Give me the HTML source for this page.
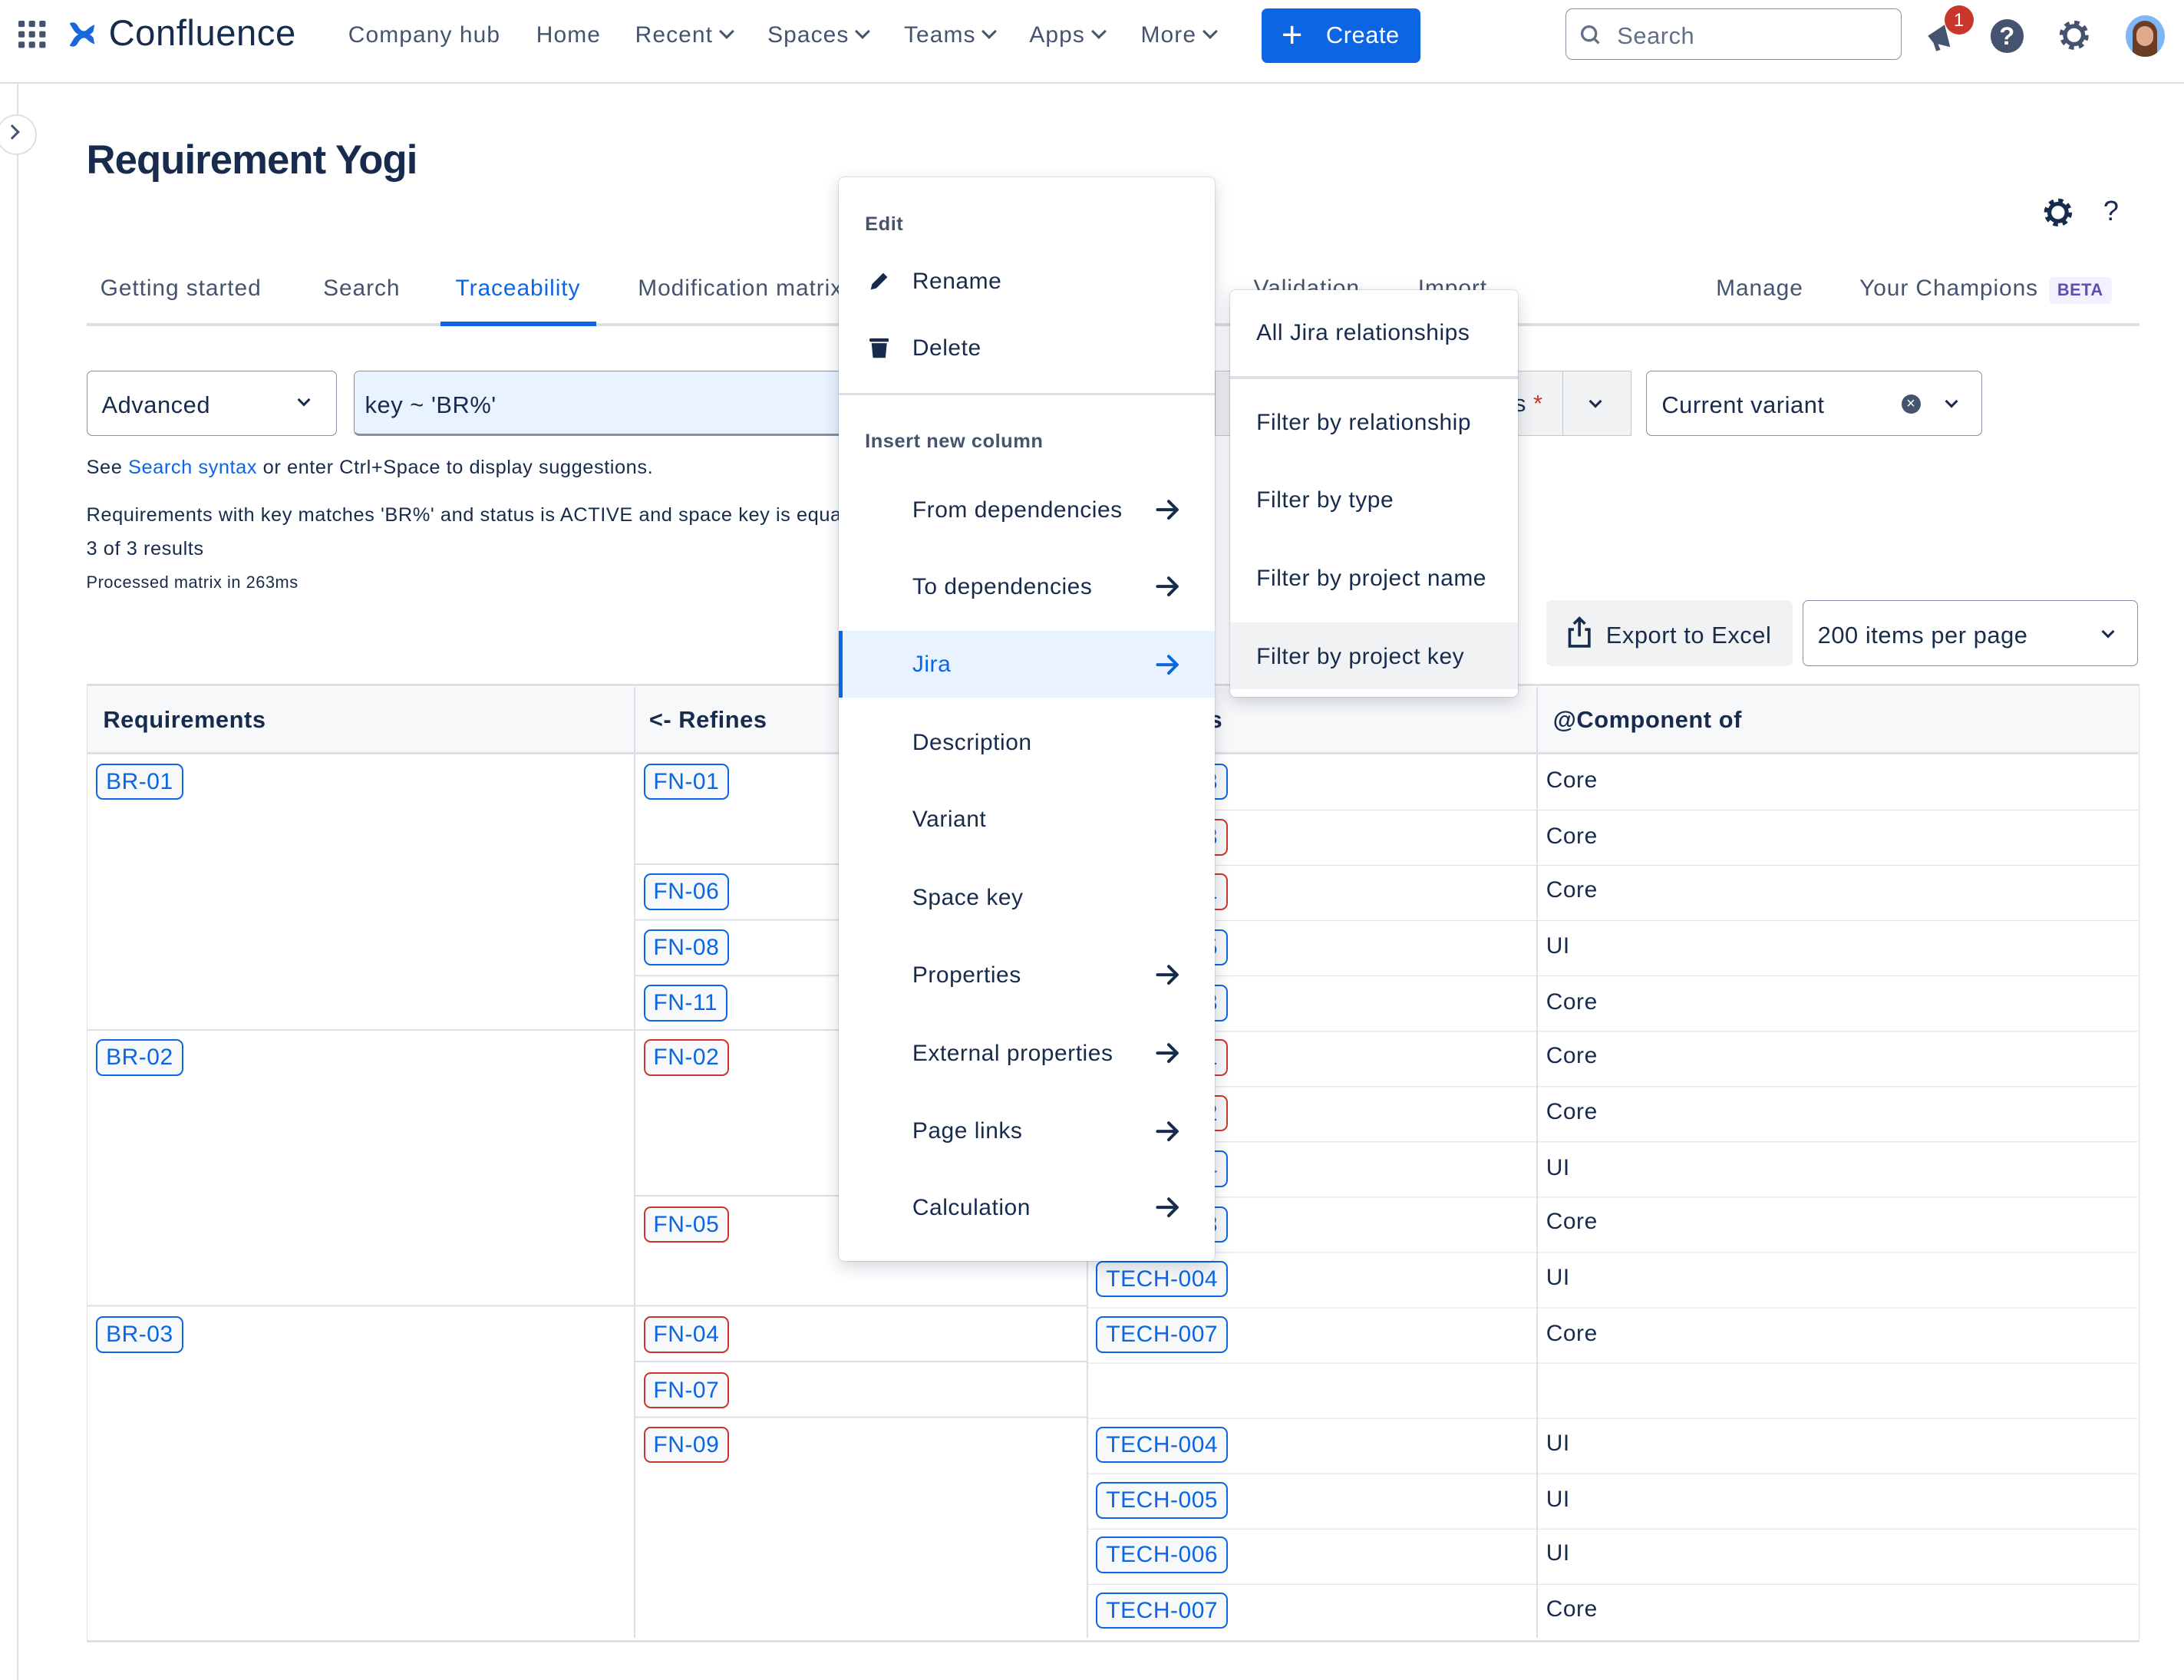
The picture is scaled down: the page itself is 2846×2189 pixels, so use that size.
<!DOCTYPE html>
<html><head><meta charset="utf-8"><style>
html,body{margin:0;padding:0;background:#fff;overflow:hidden}
body{width:2846px;height:2188px}
#w{position:absolute;left:0;top:0;width:1568px;height:1206px;zoom:1.81505;font-family:"Liberation Sans",sans-serif;color:#172b4d;letter-spacing:0.3px}
.a{position:absolute;white-space:nowrap}
.nav{font-size:16.5px;color:#44546f;top:16px;letter-spacing:0.6px}
.chev{display:inline-block;width:6px;height:6px;border-right:2px solid currentColor;border-bottom:2px solid currentColor;transform:rotate(45deg);margin-left:6px;position:relative;top:-4px}
.tab{font-size:16.5px;color:#44546f;top:198px;letter-spacing:0.5px}
.tag{position:absolute;height:24px;line-height:24px;padding:0 6px;border:1.5px solid #0c66e4;border-radius:5px;background:#f7f8f9;color:#0c66e4;font-size:16.5px}
.tag.r{border-color:#c9372c;color:#0c66e4}
.mi{position:absolute;font-size:16.5px;color:#172b4d;left:53px}
.arr{position:absolute;left:226px;width:20px;height:20px}
.cell{position:absolute;font-size:16.5px;color:#172b4d}
</style></head><body><div id="w">
<div class="a" style="left:0;top:59px;width:1568px;height:1px;background:#dcdfe4"></div>
<svg class="a" style="left:13px;top:15px" width="20" height="20" viewBox="0 0 20 20" fill="#44546f"><rect x="0" y="0" width="4.5" height="4.5" rx="1"/><rect x="7.5" y="0" width="4.5" height="4.5" rx="1"/><rect x="15" y="0" width="4.5" height="4.5" rx="1"/><rect x="0" y="7.5" width="4.5" height="4.5" rx="1"/><rect x="7.5" y="7.5" width="4.5" height="4.5" rx="1"/><rect x="15" y="7.5" width="4.5" height="4.5" rx="1"/><rect x="0" y="15" width="4.5" height="4.5" rx="1"/><rect x="7.5" y="15" width="4.5" height="4.5" rx="1"/><rect x="15" y="15" width="4.5" height="4.5" rx="1"/></svg>
<svg class="a" style="left:48px;top:14px" width="22" height="22" viewBox="0 0 22 22" fill="#1868db"><path d="M2 3 Q6 1 8 5 Q11 10 14 8 Q17 5 20 4 L19 9 Q15 13 11 12 Q7 11 5 8 Z"/><path d="M2 19 Q6 21 8 17 Q11 12 14 14 Q17 17 20 18 L19 13 Q15 9 11 10 Q7 11 5 14 Z"/></svg>
<div class="a" style="left:78px;top:9px;font-size:26px;color:#172b4d">Confluence</div>
<div class="a nav" style="left:250px">Company hub</div>
<div class="a nav" style="left:385px">Home</div>
<div class="a nav" style="left:456px">Recent<span class="chev"></span></div>
<div class="a nav" style="left:551px">Spaces<span class="chev"></span></div>
<div class="a nav" style="left:649px">Teams<span class="chev"></span></div>
<div class="a nav" style="left:739px">Apps<span class="chev"></span></div>
<div class="a nav" style="left:819px">More<span class="chev"></span></div>
<div class="a" style="left:906px;top:6px;width:114px;height:39px;background:#0c66e4;border-radius:4px;color:#fff;font-size:17px;line-height:39px"><span style="position:absolute;left:14px;top:0;font-size:26px;font-weight:300">+</span><span style="position:absolute;left:46px">Create</span></div>
<div class="a" style="left:1124px;top:6px;width:240px;height:36px;border:1px solid #8590a2;border-radius:5px"></div>
<svg class="a" style="left:1134px;top:17px" width="16" height="16" viewBox="0 0 16 16" fill="none" stroke="#626f86" stroke-width="1.8"><circle cx="7" cy="7" r="5"/><path d="M10.5 10.5 L14 14"/></svg>
<div class="a" style="left:1161px;top:16px;font-size:17px;color:#626f86">Search</div>
<svg class="a" style="left:1380px;top:14px" width="26" height="26" viewBox="0 0 26 26" fill="#44546f"><path d="M4 12 L16 4 L20 20 L8 17 Z"/><path d="M8 17 L10 23 L13 22 L11 17Z"/></svg>
<div class="a" style="left:1396px;top:4px;width:21px;height:21px;border-radius:50%;background:#c9372c;color:#fff;font-size:13px;text-align:center;line-height:21px">1</div>
<div class="a" style="left:1429px;top:14px;width:24px;height:24px;border-radius:50%;background:#44546f;color:#fff;font-weight:bold;font-size:18px;text-align:center;line-height:24px">?</div>
<svg class="a" style="left:1477px;top:13px" width="24" height="24" viewBox="0 0 24 24"><circle cx="12" cy="12" r="8" fill="none" stroke="#44546f" stroke-width="5" stroke-dasharray="3.2 3.1"/><circle cx="12" cy="12" r="6.5" fill="none" stroke="#44546f" stroke-width="3"/></svg>
<div class="a" style="left:1526px;top:11px;width:28px;height:30px;border-radius:50%;background:#7fb6f5;overflow:hidden"><div style="position:absolute;left:5px;top:4px;width:18px;height:26px;border-radius:9px 9px 3px 3px;background:#6b3d24"></div><div style="position:absolute;left:8px;top:8px;width:12px;height:14px;border-radius:6px;background:#e0a98a"></div></div>
<div class="a" style="left:12px;top:60px;width:1px;height:1146px;background:#dcdfe4"></div>
<div class="a" style="left:-3px;top:82px;width:27px;height:27px;border-radius:50%;border:1.5px solid #dcdfe4;background:#fff"></div>
<div class="a" style="left:5px;top:91px;width:6px;height:6px;border-right:2px solid #44546f;border-top:2px solid #44546f;transform:rotate(45deg)"></div>
<div class="a" style="left:62px;top:98px;font-size:29px;font-weight:bold;letter-spacing:-0.5px">Requirement Yogi</div>
<svg class="a" style="left:1466px;top:141px" width="23" height="23" viewBox="0 0 24 24"><circle cx="12" cy="12" r="8" fill="none" stroke="#172b4d" stroke-width="5" stroke-dasharray="3.2 3.1"/><circle cx="12" cy="12" r="6.5" fill="none" stroke="#172b4d" stroke-width="3"/></svg>
<div class="a" style="left:1510px;top:140px;font-size:20px;color:#172b4d">?</div>
<div class="a tab" style="left:72px">Getting started</div>
<div class="a tab" style="left:232px">Search</div>
<div class="a tab" style="left:327px;color:#0c66e4">Traceability</div>
<div class="a tab" style="left:458px">Modification matrix</div>
<div class="a tab" style="left:900px">Validation</div>
<div class="a tab" style="left:1018px">Import</div>
<div class="a tab" style="left:1232px">Manage</div>
<div class="a tab" style="left:1335px">Your Champions</div>
<div class="a" style="left:1471px;top:199px;width:45px;height:19px;background:#f3f0ff;color:#5e4db2;font-size:12px;font-weight:bold;text-align:center;line-height:19px;border-radius:3px">BETA</div>
<div class="a" style="left:62px;top:232px;width:1474px;height:2px;background:#dcdfe4"></div>
<div class="a" style="left:316px;top:231px;width:112px;height:3px;background:#0c66e4"></div>
<div class="a" style="left:62px;top:266px;width:179px;height:46px;border:1px solid #8590a2;border-radius:4px"></div>
<div class="a" style="left:73px;top:281px;font-size:17px">Advanced</div>
<div class="a" style="left:215px;top:284px;width:5px;height:5px;border-right:2px solid #172b4d;border-bottom:2px solid #172b4d;transform:rotate(45deg)"></div>
<div class="a" style="left:254px;top:266px;width:620px;height:45px;border:1px solid #8590a2;border-bottom:2px solid #8590a2;border-radius:4px;background:#e9f2ff"></div>
<div class="a" style="left:262px;top:281px;font-size:17px">key ~ 'BR%'</div>
<div class="a" style="left:872px;top:266px;width:250px;height:46px;border:1px solid #c1c7d0;background:#f1f2f4"></div>
<div class="a" style="left:1087px;top:280px;font-size:17px">s <span style="color:#c9372c">*</span></div>
<div class="a" style="left:1122px;top:266px;width:48px;height:46px;border:1px solid #c1c7d0;background:#f1f2f4"></div>
<div class="a" style="left:1142px;top:285px;width:5px;height:5px;border-right:2px solid #172b4d;border-bottom:2px solid #172b4d;transform:rotate(45deg)"></div>
<div class="a" style="left:1182px;top:266px;width:240px;height:46px;border:1px solid #8590a2;border-radius:4px"></div>
<div class="a" style="left:1193px;top:281px;font-size:17px">Current variant</div>
<div class="a" style="left:1365px;top:283px;width:14px;height:14px;border-radius:50%;background:#44546f;color:#fff;font-size:11px;text-align:center;line-height:14px">×</div>
<div class="a" style="left:1398px;top:285px;width:5px;height:5px;border-right:2px solid #172b4d;border-bottom:2px solid #172b4d;transform:rotate(45deg)"></div>
<div class="a" style="left:62px;top:328px;font-size:14px">See <span style="color:#0c66e4">Search syntax</span> or enter Ctrl+Space to display suggestions.</div>
<div class="a" style="left:62px;top:362px;font-size:14px">Requirements with key matches 'BR%' and status is ACTIVE and space key is equal</div>
<div class="a" style="left:62px;top:386px;font-size:14px">3 of 3 results</div>
<div class="a" style="left:62px;top:411px;font-size:12px">Processed matrix in 263ms</div>
<div class="a" style="left:1110px;top:431px;width:177px;height:47px;background:#f1f2f4;border-radius:4px"></div>
<svg class="a" style="left:1124px;top:442px" width="20" height="24" viewBox="0 0 20 24" fill="none" stroke="#172b4d" stroke-width="2"><path d="M6 10 H3 V22 H17 V10 H14"/><path d="M10 2 V15 M6 6 L10 2 L14 6"/></svg>
<div class="a" style="left:1153px;top:446px;font-size:17px">Export to Excel</div>
<div class="a" style="left:1294px;top:431px;width:240px;height:46px;border:1px solid #8590a2;border-radius:4px"></div>
<div class="a" style="left:1305px;top:446px;font-size:17px">200 items per page</div>
<div class="a" style="left:1510px;top:450px;width:5px;height:5px;border-right:2px solid #172b4d;border-bottom:2px solid #172b4d;transform:rotate(45deg)"></div>
<div class="a" style="left:62px;top:491px;width:1473px;height:685px;border:1px solid #dcdfe4;border-top:2px solid #dcdfe4;border-bottom:2px solid #dcdfe4"></div>
<div class="a" style="left:63px;top:493px;width:1472px;height:47px;background:#f7f8f9;border-bottom:2px solid #dcdfe4"></div>
<div class="a" style="left:74px;top:507px;font-size:17px;font-weight:bold">Requirements</div>
<div class="a" style="left:466px;top:507px;font-size:17px;font-weight:bold">&lt;- Refines</div>
<div class="a" style="left:868px;top:507px;font-size:17px;font-weight:bold">s</div>
<div class="a" style="left:1115px;top:507px;font-size:17px;font-weight:bold">@Component of</div>
<div class="a" style="left:455px;top:493px;width:1px;height:683px;background:#dcdfe4"></div>
<div class="a" style="left:780px;top:493px;width:1px;height:683px;background:#dcdfe4"></div>
<div class="a" style="left:1103px;top:493px;width:1px;height:683px;background:#dcdfe4"></div>
<div class="a" style="left:780px;top:581px;width:755px;height:1px;background:#dcdfe4;box-shadow:0 39.7px 0 #dcdfe4,0 79.4px 0 #dcdfe4,0 119.1px 0 #dcdfe4,0 158.8px 0 #dcdfe4,0 198.5px 0 #dcdfe4,0 238.2px 0 #dcdfe4,0 277.9px 0 #dcdfe4,0 317.6px 0 #dcdfe4,0 357.3px 0 #dcdfe4,0 397px 0 #dcdfe4,0 436.7px 0 #dcdfe4,0 476.4px 0 #dcdfe4,0 516.1px 0 #dcdfe4,0 555.8px 0 #dcdfe4"></div>
<div class="a" style="left:455px;top:620px;width:325px;height:1px;background:#dcdfe4;box-shadow:0 40px 0 #dcdfe4,0 80px 0 #dcdfe4,0 119px 0 #dcdfe4,0 238px 0 #dcdfe4,0 317px 0 #dcdfe4,0 357px 0 #dcdfe4,0 397px 0 #dcdfe4"></div>
<div class="a" style="left:62px;top:739px;width:393px;height:1px;background:#dcdfe4;box-shadow:0 198px 0 #dcdfe4"></div>
<div class="tag" style="left:69px;top:548px">BR-01</div>
<div class="tag" style="left:69px;top:746px">BR-02</div>
<div class="tag" style="left:69px;top:945px">BR-03</div>
<div class="tag" style="left:462px;top:548px">FN-01</div>
<div class="tag" style="left:462px;top:627px">FN-06</div>
<div class="tag" style="left:462px;top:667px">FN-08</div>
<div class="tag" style="left:462px;top:707px">FN-11</div>
<div class="tag r" style="left:462px;top:746px">FN-02</div>
<div class="tag r" style="left:462px;top:866px">FN-05</div>
<div class="tag r" style="left:462px;top:945px">FN-04</div>
<div class="tag r" style="left:462px;top:985px">FN-07</div>
<div class="tag r" style="left:462px;top:1024px">FN-09</div>
<div class="tag" style="left:787px;top:548px">TECH-003</div>
<div class="tag r" style="left:787px;top:588px">TECH-003</div>
<div class="tag r" style="left:787px;top:627px">TECH-001</div>
<div class="tag" style="left:787px;top:667px">TECH-005</div>
<div class="tag" style="left:787px;top:707px">TECH-003</div>
<div class="tag r" style="left:787px;top:746px">TECH-001</div>
<div class="tag r" style="left:787px;top:786px">TECH-002</div>
<div class="tag" style="left:787px;top:826px">TECH-004</div>
<div class="tag" style="left:787px;top:866px">TECH-003</div>
<div class="tag" style="left:787px;top:905px">TECH-004</div>
<div class="tag" style="left:787px;top:945px">TECH-007</div>
<div class="tag" style="left:787px;top:1024px">TECH-004</div>
<div class="tag" style="left:787px;top:1064px">TECH-005</div>
<div class="tag" style="left:787px;top:1103px">TECH-006</div>
<div class="tag" style="left:787px;top:1143px">TECH-007</div>
<div class="cell a" style="left:1110px;top:551px">Core</div>
<div class="cell a" style="left:1110px;top:591px">Core</div>
<div class="cell a" style="left:1110px;top:630px">Core</div>
<div class="cell a" style="left:1110px;top:670px">UI</div>
<div class="cell a" style="left:1110px;top:710px">Core</div>
<div class="cell a" style="left:1110px;top:749px">Core</div>
<div class="cell a" style="left:1110px;top:789px">Core</div>
<div class="cell a" style="left:1110px;top:829px">UI</div>
<div class="cell a" style="left:1110px;top:868px">Core</div>
<div class="cell a" style="left:1110px;top:908px">UI</div>
<div class="cell a" style="left:1110px;top:948px">Core</div>
<div class="cell a" style="left:1110px;top:1027px">UI</div>
<div class="cell a" style="left:1110px;top:1067px">UI</div>
<div class="cell a" style="left:1110px;top:1106px">UI</div>
<div class="cell a" style="left:1110px;top:1146px">Core</div>
<div class="a" style="left:602px;top:127px;width:270px;height:778px;background:#fff;border-radius:4px;box-shadow:0 4px 12px rgba(9,30,66,.18),0 0 1px rgba(9,30,66,.35)">
 <div class="a" style="left:19px;top:26px;font-size:14px;font-weight:bold;color:#44546f">Edit</div>
 <svg class="a" style="left:21px;top:67px" width="16" height="16" viewBox="0 0 16 16" fill="#172b4d"><path d="M2 14 L3 10 L11 2 L14 5 L6 13 Z"/></svg>
 <div class="mi" style="top:66px">Rename</div>
 <svg class="a" style="left:22px;top:115px" width="14" height="16" viewBox="0 0 14 16" fill="#172b4d"><rect x="0" y="1" width="14" height="2.5" rx="1"/><path d="M1.5 4.5 H12.5 L11.5 15 H2.5Z"/></svg>
 <div class="mi" style="top:114px">Delete</div>
 <div class="a" style="left:0;top:155px;width:270px;height:2px;background:#dcdfe4"></div>
 <div class="a" style="left:19px;top:182px;font-size:14px;font-weight:bold;color:#44546f">Insert new column</div>
 <div class="mi" style="top:230px">From dependencies</div>
 <div class="mi" style="top:285px">To dependencies</div>
 <div class="a" style="left:0;top:326px;width:270px;height:48px;background:#e9f2ff;border-left:3px solid #0c66e4;box-sizing:border-box"></div>
 <div class="mi" style="top:341px;color:#0c66e4">Jira</div>
 <div class="mi" style="top:397px">Description</div>
 <div class="mi" style="top:452px">Variant</div>
 <div class="mi" style="top:508px">Space key</div>
 <div class="mi" style="top:564px">Properties</div>
 <div class="mi" style="top:620px">External properties</div>
 <div class="mi" style="top:676px">Page links</div>
 <div class="mi" style="top:731px">Calculation</div>
 <svg class="arr" style="top:229px" viewBox="0 0 20 20" fill="none" stroke="#172b4d" stroke-width="2.2" stroke-linecap="round" stroke-linejoin="round"><path d="M3 10 H17 M11 4 L17 10 L11 16"/></svg>
 <svg class="arr" style="top:284px" viewBox="0 0 20 20" fill="none" stroke="#172b4d" stroke-width="2.2" stroke-linecap="round" stroke-linejoin="round"><path d="M3 10 H17 M11 4 L17 10 L11 16"/></svg>
 <svg class="arr" style="top:340px" viewBox="0 0 20 20" fill="none" stroke="#0c66e4" stroke-width="2.2" stroke-linecap="round" stroke-linejoin="round"><path d="M3 10 H17 M11 4 L17 10 L11 16"/></svg>
 <svg class="arr" style="top:563px" viewBox="0 0 20 20" fill="none" stroke="#172b4d" stroke-width="2.2" stroke-linecap="round" stroke-linejoin="round"><path d="M3 10 H17 M11 4 L17 10 L11 16"/></svg>
 <svg class="arr" style="top:619px" viewBox="0 0 20 20" fill="none" stroke="#172b4d" stroke-width="2.2" stroke-linecap="round" stroke-linejoin="round"><path d="M3 10 H17 M11 4 L17 10 L11 16"/></svg>
 <svg class="arr" style="top:675px" viewBox="0 0 20 20" fill="none" stroke="#172b4d" stroke-width="2.2" stroke-linecap="round" stroke-linejoin="round"><path d="M3 10 H17 M11 4 L17 10 L11 16"/></svg>
 <svg class="arr" style="top:730px" viewBox="0 0 20 20" fill="none" stroke="#172b4d" stroke-width="2.2" stroke-linecap="round" stroke-linejoin="round"><path d="M3 10 H17 M11 4 L17 10 L11 16"/></svg>
</div>
<div class="a" style="left:883px;top:208px;width:207px;height:292px;background:#fff;border-radius:4px;box-shadow:0 4px 12px rgba(9,30,66,.18),0 0 1px rgba(9,30,66,.35)">
 <div class="a" style="left:19px;top:22px;font-size:16.5px">All Jira relationships</div>
 <div class="a" style="left:0;top:62px;width:207px;height:2px;background:#dcdfe4"></div>
 <div class="a" style="left:19px;top:86px;font-size:16.5px">Filter by relationship</div>
 <div class="a" style="left:19px;top:142px;font-size:16.5px">Filter by type</div>
 <div class="a" style="left:19px;top:198px;font-size:16.5px">Filter by project name</div>
 <div class="a" style="left:0;top:239px;width:207px;height:48px;background:#f1f2f4"></div>
 <div class="a" style="left:19px;top:254px;font-size:16.5px">Filter by project key</div>
</div>
</div></body></html>
